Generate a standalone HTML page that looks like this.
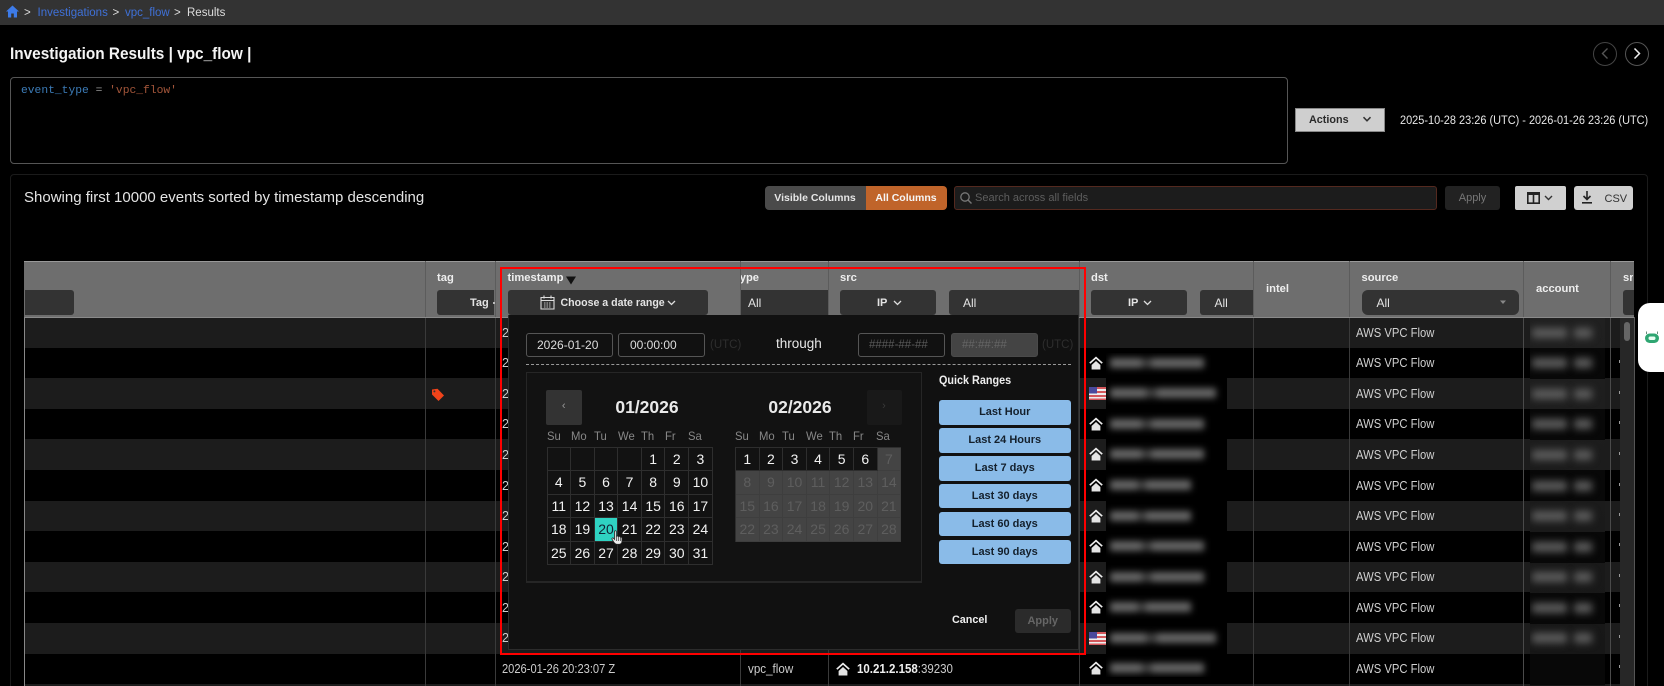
<!DOCTYPE html>
<html lang="en"><head><meta charset="utf-8"><title>Investigation Results</title>
<style>
*{box-sizing:border-box}
html,body{margin:0;padding:0;background:#000}
body{width:1664px;height:686px;overflow:hidden;position:relative;font-family:"Liberation Sans",sans-serif;color:#ddd}
#w{position:absolute;left:0;top:0;width:1664px;height:686px;overflow:hidden;filter:blur(.35px)}
.a{position:absolute;white-space:nowrap}
.z{position:absolute;left:25px;width:1595px;height:30.6px;background:#1c1c1c}
.sep{position:absolute;top:261px;width:1px;height:425px;background:#3a3a3a}
.lab{position:absolute;font-size:11.2px;font-weight:700;color:#eee;line-height:14px;white-space:nowrap}
.sel{position:absolute;top:290px;height:25px;background:#333;border-radius:3px;color:#e4e4e4;font-size:12px;line-height:26px;white-space:nowrap;overflow:hidden}
.aws{position:absolute;left:1356px;font-size:12.5px;line-height:14px;color:#d0d0d0;white-space:nowrap;transform:scaleX(.9);transform-origin:left}
.two{position:absolute;left:502px;font-size:12.5px;line-height:14px;color:#ccc;width:6px;overflow:hidden}
.tk{position:absolute;left:1619px;width:1px;height:3px;background:#999}
.inp{position:absolute;top:333px;height:24px;width:87px;border:1px solid #555;border-radius:3px;font-size:12px;line-height:22px;color:#ddd;padding-left:10px;white-space:nowrap}
.utc{position:absolute;top:338px;font-size:11.5px;line-height:14px;color:#2e2e2e}
.wd{position:absolute;top:429px;font-size:12px;line-height:14px;color:#888;transform:scaleX(.94);transform-origin:left}
.g{position:absolute;top:446.5px;display:grid;grid-template-columns:repeat(7,23.6px);grid-auto-rows:23.5px;border-top:1px solid #2e2e2e;border-left:1px solid #2e2e2e}
.g div{border-right:1px solid #2e2e2e;border-bottom:1px solid #2e2e2e;text-align:center;font-size:14px;line-height:23px;color:#f2f2f2;font-weight:500}
.g .d{background:#444;color:#5e5e5e;border-color:#3e3e3e}
.g .s{background:#2fd3c2;color:#123}
.q{position:absolute;left:939px;width:131.5px;height:24.5px;background:#8abbe8;border-radius:3px;color:#14202c;font-size:11px;font-weight:700;line-height:24px;text-align:center}
.bar{position:absolute;left:4px;height:10px;background:linear-gradient(90deg,#666 0 32%,#3a3a3a 36% 42%,#666 46% 100%);filter:blur(3.5px)}
.acc{position:absolute;height:10px;background:#5c5c5c;filter:blur(4px)}
</style></head><body>
<svg width="0" height="0" style="position:absolute"><defs>
<symbol id="h" viewBox="0 0 14 14"><path d="M7 .5 13.8 6.6 12.6 7.8 7 2.8 1.4 7.8 .2 6.6Z" fill="#eee"/><path d="M2.6 9 7 5 11.4 9V13.5H2.6Z" fill="#e4e4e4"/></symbol>
<symbol id="f" viewBox="0 0 17 13" preserveAspectRatio="none"><rect width="17" height="13" fill="#eee"/><path d="M0 0H17V2H0ZM0 4H17V6H0ZM0 8H17V10H0ZM0 11.5H17V13H0Z" fill="#d4585c"/><rect width="8" height="6.5" fill="#4a4a9c"/></symbol>
</defs></svg>
<div id="w">
<!-- top bar -->
<div class="a" style="left:0;top:0;width:1664px;height:24.5px;background:#333"></div>
<svg class="a" style="left:6px;top:5px" width="13" height="13" viewBox="0 0 13 13"><path d="M6.5 .5 13 6.5H11V12.5H7.8V8.5H5.2V12.5H2V6.5H0Z" fill="#3d7be8"/></svg>
<div class="a" style="left:24px;top:6px;font-size:11.5px;line-height:14px;color:#ddd">&gt;</div>
<div class="a" style="left:37.5px;top:6px;font-size:11.5px;line-height:14px;color:#3f71d8">Investigations</div>
<div class="a" style="left:112.5px;top:6px;font-size:11.5px;line-height:14px;color:#ddd">&gt;</div>
<div class="a" style="left:125px;top:6px;font-size:11.5px;line-height:14px;color:#3f71d8">vpc_flow</div>
<div class="a" style="left:174px;top:6px;font-size:11.5px;line-height:14px;color:#ddd">&gt;</div>
<div class="a" style="left:187px;top:6px;font-size:11.5px;line-height:14px;color:#ddd">Results</div>
<!-- title -->
<div class="a" style="left:9.5px;top:44px;font-size:16.5px;line-height:20px;font-weight:700;color:#f4f4f4;transform:scaleX(.93);transform-origin:left">Investigation Results | vpc_flow |</div>
<div class="a" style="left:1593px;top:41.5px;width:24px;height:24px;border:1px solid #444;border-radius:50%"></div>
<svg class="a" style="left:1600px;top:47px" width="10" height="13" viewBox="0 0 10 13"><path d="M7.5 1.5 2.5 6.5 7.5 11.5" fill="none" stroke="#555" stroke-width="1.4"/></svg>
<div class="a" style="left:1625px;top:41.5px;width:24px;height:24px;border:1px solid #555;border-radius:50%"></div>
<svg class="a" style="left:1632px;top:47px" width="10" height="13" viewBox="0 0 10 13"><path d="M2.5 1.5 7.5 6.5 2.5 11.5" fill="none" stroke="#eee" stroke-width="1.5"/></svg>
<!-- query -->
<div class="a" style="left:9.5px;top:77px;width:1278px;height:87px;border:1px solid #555;border-radius:4px"></div>
<div class="a" style="left:21px;top:84px;font-family:'Liberation Mono',monospace;font-size:11.3px;line-height:14px"><span style="color:#3c7cb8">event_type</span> <span style="color:#999">=</span> <span style="color:#a4563a">'vpc_flow'</span></div>
<div class="a" style="left:1295px;top:108px;width:90px;height:24px;background:#cfcfcf;border:1px solid #888"></div>
<div class="a" style="left:1309px;top:113px;font-size:10.8px;line-height:14px;font-weight:700;color:#2a2a2a">Actions</div>
<svg class="a" style="left:1362px;top:116px" width="10" height="7" viewBox="0 0 10 7"><path d="M1.5 1.2 5 4.8 8.5 1.2" fill="none" stroke="#333" stroke-width="1.5"/></svg>
<div class="a" style="left:1400px;top:113px;font-size:12.1px;line-height:14px;color:#e8e8e8;transform:scaleX(.905);transform-origin:left">2025-10-28 23:26 (UTC) - 2026-01-26 23:26 (UTC)</div>
<!-- panel -->
<div class="a" style="left:10px;top:174px;width:1638px;height:520px;border:1px solid #1b1b1b;border-radius:4px"></div>
<div class="a" style="left:24px;top:189px;font-size:15px;line-height:18px;color:#e4e4e4">Showing first 10000 events sorted by timestamp descending</div>
<div class="a" style="left:764.5px;top:186px;width:101px;height:24px;background:#4a4a4a;border-radius:4px 0 0 4px;text-align:center;font-size:10.5px;font-weight:700;line-height:24px;color:#e6e6e6">Visible Columns</div>
<div class="a" style="left:865.5px;top:186px;width:81px;height:24px;background:#c0642a;border-radius:0 4px 4px 0;text-align:center;font-size:10.5px;font-weight:700;line-height:24px;color:#f6f6f6">All Columns</div>
<div class="a" style="left:954px;top:186px;width:483px;height:23.5px;background:#1c1c1c;border:1px solid #54291f;border-radius:3px"></div>
<svg class="a" style="left:959px;top:191px" width="14" height="14" viewBox="0 0 14 14"><circle cx="6" cy="6" r="4.2" fill="none" stroke="#777" stroke-width="1.3"/><path d="M9 9 12.5 12.5" stroke="#777" stroke-width="1.4"/></svg>
<div class="a" style="left:975px;top:191px;font-size:11px;line-height:14px;color:#5e5e5e">Search across all fields</div>
<div class="a" style="left:1445px;top:186px;width:55px;height:23.5px;background:#222;border-radius:3px;text-align:center;font-size:11px;line-height:24px;color:#777">Apply</div>
<div class="a" style="left:1515px;top:186px;width:51px;height:23.5px;background:#d0d0d0;border-radius:2px"></div>
<svg class="a" style="left:1527px;top:192px" width="13" height="12" viewBox="0 0 13 12"><path d="M.8.8H12.2V11.2H.8ZM6.5.8V11.2" fill="none" stroke="#222" stroke-width="1.6"/><rect x=".8" y=".8" width="11.4" height="2.2" fill="#222"/></svg>
<svg class="a" style="left:1544px;top:195px" width="9" height="6" viewBox="0 0 9 6"><path d="M1 1 4.5 4.5 8 1" fill="none" stroke="#333" stroke-width="1.4"/></svg>
<div class="a" style="left:1574px;top:186px;width:59px;height:23.5px;background:#d0d0d0;border-radius:3px"></div>
<svg class="a" style="left:1581px;top:191px" width="12" height="14" viewBox="0 0 12 14"><path d="M6 0V8M2.5 5 6 8.5 9.5 5" fill="none" stroke="#222" stroke-width="1.6"/><rect x="1" y="11" width="10" height="1.6" fill="#222"/></svg>
<div class="a" style="left:1604.5px;top:192px;font-size:11px;line-height:14px;color:#333">CSV</div>

<!-- rows -->
<div class="z" style="top:317px"></div>
<div class="z" style="top:378.2px"></div>
<div class="z" style="top:439.4px"></div>
<div class="z" style="top:500.6px"></div>
<div class="z" style="top:561.8px"></div>
<div class="z" style="top:623px"></div>
<div class="z" style="top:684.2px"></div>

<!-- separators -->
<div class="a" style="left:24px;top:261px;width:1px;height:425px;background:#888"></div>
<div class="sep" style="left:425px"></div>
<div class="sep" style="left:494.5px"></div>
<div class="sep" style="left:740px"></div>
<div class="sep" style="left:827.5px"></div>
<div class="sep" style="left:1078.5px"></div>
<div class="sep" style="left:1253px"></div>
<div class="sep" style="left:1349px"></div>
<div class="sep" style="left:1523px;background:#4a4a4a"></div>
<div class="sep" style="left:1610px;background:#4a4a4a"></div>

<!-- row content -->
<div class="two" style="top:326px">2</div><div class="two" style="top:356px">2</div><div class="two" style="top:387px">2</div><div class="two" style="top:417px">2</div><div class="two" style="top:448px">2</div><div class="two" style="top:479px">2</div><div class="two" style="top:509px">2</div><div class="two" style="top:540px">2</div><div class="two" style="top:570px">2</div><div class="two" style="top:601px">2</div><div class="two" style="top:631px">2</div>
<svg class="a" style="left:431px;top:388px" width="14" height="14" viewBox="0 0 14 14"><path d="M1 1.5 6.5 .8 13 7.5 7.5 13 1 6.5Z" fill="#f0431a"/><circle cx="3.4" cy="3.4" r="1" fill="#333"/></svg>
<div class="a" style="left:502px;top:662px;font-size:12.5px;line-height:14px;color:#ccc;transform:scaleX(.89);transform-origin:left">2026-01-26 20:23:07 Z</div>
<div class="a" style="left:748px;top:662px;font-size:12.5px;line-height:14px;color:#ccc;transform:scaleX(.93);transform-origin:left">vpc_flow</div>
<svg class="a" style="left:836px;top:662px" width="14" height="14"><use href="#h"/></svg>
<div class="a" style="left:857px;top:662px;font-size:12.5px;line-height:14px;color:#ccc;transform:scaleX(.92);transform-origin:left"><b style="color:#eee">10.21.2.158</b>:39230</div>

<div class="aws" style="top:326px">AWS VPC Flow</div><div class="aws" style="top:356px">AWS VPC Flow</div><div class="aws" style="top:387px">AWS VPC Flow</div><div class="aws" style="top:417px">AWS VPC Flow</div><div class="aws" style="top:448px">AWS VPC Flow</div><div class="aws" style="top:479px">AWS VPC Flow</div><div class="aws" style="top:509px">AWS VPC Flow</div><div class="aws" style="top:540px">AWS VPC Flow</div><div class="aws" style="top:570px">AWS VPC Flow</div><div class="aws" style="top:601px">AWS VPC Flow</div><div class="aws" style="top:631px">AWS VPC Flow</div><div class="aws" style="top:662px">AWS VPC Flow</div>

<div class="tk" style="top:360px"></div><div class="tk" style="top:391px"></div><div class="tk" style="top:421px"></div><div class="tk" style="top:452px"></div><div class="tk" style="top:483px"></div><div class="tk" style="top:513px"></div><div class="tk" style="top:543px"></div><div class="tk" style="top:574px"></div><div class="tk" style="top:604px"></div><div class="tk" style="top:635px"></div><div class="tk" style="top:665px"></div>

<!-- dst icons -->
<svg class="a" style="left:1089px;top:356px" width="14" height="14"><use href="#h"/></svg>
<svg class="a" style="left:1089px;top:387px" width="17" height="13"><use href="#f"/></svg>
<svg class="a" style="left:1089px;top:417px" width="14" height="14"><use href="#h"/></svg>
<svg class="a" style="left:1089px;top:447px" width="14" height="14"><use href="#h"/></svg>
<svg class="a" style="left:1089px;top:478px" width="14" height="14"><use href="#h"/></svg>
<svg class="a" style="left:1089px;top:509px" width="14" height="14"><use href="#h"/></svg>
<svg class="a" style="left:1089px;top:539px" width="14" height="14"><use href="#h"/></svg>
<svg class="a" style="left:1089px;top:570px" width="14" height="14"><use href="#h"/></svg>
<svg class="a" style="left:1089px;top:600px" width="14" height="14"><use href="#h"/></svg>
<svg class="a" style="left:1089px;top:632px" width="17" height="13"><use href="#f"/></svg>
<svg class="a" style="left:1089px;top:661px" width="14" height="14"><use href="#h"/></svg>

<!-- dst blurred -->
<div class="a" style="left:1106px;top:353px;width:121px;height:324px;background:#000;overflow:hidden">
<div class="bar" style="top:5px;width:94px"></div>
<div class="bar" style="top:35px;width:106px"></div>
<div class="bar" style="top:66px;width:94px"></div>
<div class="bar" style="top:96px;width:94px"></div>
<div class="bar" style="top:127px;width:81px"></div>
<div class="bar" style="top:158px;width:81px"></div>
<div class="bar" style="top:188px;width:94px"></div>
<div class="bar" style="top:219px;width:94px"></div>
<div class="bar" style="top:249px;width:81px"></div>
<div class="bar" style="top:280px;width:106px"></div>
<div class="bar" style="top:310px;width:94px"></div>
</div>

<!-- account blurred -->
<div class="a" style="left:1530px;top:318px;width:75px;height:368px;overflow:hidden;background:linear-gradient(#202020,#161616 100%)">
<div style="position:absolute;left:0;top:30px;width:75px;height:30.6px;background:#080808"></div><div style="position:absolute;left:0;top:91px;width:75px;height:30.6px;background:#080808"></div><div style="position:absolute;left:0;top:152px;width:75px;height:30.6px;background:#080808"></div><div style="position:absolute;left:0;top:214px;width:75px;height:30.6px;background:#080808"></div><div style="position:absolute;left:0;top:275px;width:75px;height:30.6px;background:#080808"></div><div style="position:absolute;left:0;top:336px;width:75px;height:30.6px;background:#080808"></div>
<div class="acc" style="left:2px;top:10px;width:35px"></div><div class="acc" style="left:44px;top:10px;width:18px"></div>
<div class="acc" style="left:2px;top:40px;width:35px"></div><div class="acc" style="left:44px;top:40px;width:18px"></div>
<div class="acc" style="left:2px;top:71px;width:35px"></div><div class="acc" style="left:44px;top:71px;width:18px"></div>
<div class="acc" style="left:2px;top:101px;width:35px"></div><div class="acc" style="left:44px;top:101px;width:18px"></div>
<div class="acc" style="left:2px;top:132px;width:35px"></div><div class="acc" style="left:44px;top:132px;width:18px"></div>
<div class="acc" style="left:2px;top:163px;width:35px"></div><div class="acc" style="left:44px;top:163px;width:18px"></div>
<div class="acc" style="left:2px;top:193px;width:35px"></div><div class="acc" style="left:44px;top:193px;width:18px"></div>
<div class="acc" style="left:2px;top:224px;width:35px"></div><div class="acc" style="left:44px;top:224px;width:18px"></div>
<div class="acc" style="left:2px;top:254px;width:35px"></div><div class="acc" style="left:44px;top:254px;width:18px"></div>
<div class="acc" style="left:2px;top:285px;width:35px"></div><div class="acc" style="left:44px;top:285px;width:18px"></div>
<div class="acc" style="left:2px;top:315px;width:35px"></div><div class="acc" style="left:44px;top:315px;width:18px"></div>
</div>

<!-- scrollbar -->
<div class="a" style="left:1620px;top:317px;width:13.5px;height:369px;background:#272727"></div>
<div class="a" style="left:1624px;top:322px;width:5.5px;height:19px;background:#666;border-radius:3px"></div>
<div class="a" style="left:1633.5px;top:317px;width:1px;height:369px;background:#555"></div>

<!-- header -->
<div class="a" style="left:24px;top:260.5px;width:1610px;height:57px;background:#6e6e6e;border-top:1px solid #999;border-bottom:1px solid #8a8a8a;overflow:hidden"></div>
<div class="a" style="left:425px;top:261px;width:1px;height:56px;background:#5c5c5c"></div>
<div class="a" style="left:494.5px;top:261px;width:1px;height:56px;background:#5c5c5c"></div>
<div class="a" style="left:740px;top:261px;width:1px;height:56px;background:#5c5c5c"></div>
<div class="a" style="left:827.5px;top:261px;width:1px;height:56px;background:#5c5c5c"></div>
<div class="a" style="left:1078.5px;top:261px;width:1px;height:56px;background:#5c5c5c"></div>
<div class="a" style="left:1253px;top:261px;width:1px;height:56px;background:#5c5c5c"></div>
<div class="a" style="left:1349px;top:261px;width:1px;height:56px;background:#5c5c5c"></div>
<div class="a" style="left:1523px;top:261px;width:1px;height:56px;background:#5c5c5c"></div>
<div class="a" style="left:1610px;top:261px;width:1px;height:56px;background:#5c5c5c"></div>

<div class="sel" style="left:25px;width:49px;border-radius:0 3px 3px 0"></div>
<div class="lab" style="left:437px;top:271px">tag</div>
<div class="sel" style="left:437px;width:57px;border-radius:3px 0 0 3px;font-weight:700;font-size:11px;padding-left:33px">Tag</div>
<div class="a" style="left:493px;top:302px;width:1.5px;height:1.5px;background:#bbb"></div>
<div class="lab" style="left:507.5px;top:271px">timestamp</div>
<svg class="a" style="left:565px;top:276px" width="12" height="9" viewBox="0 0 12 9"><path d="M1 .5H11L6 8.5Z" fill="#111"/></svg>
<div class="sel" style="left:507.5px;width:200px;font-weight:700;font-size:10.6px;padding-left:53px">Choose a date range</div>
<svg class="a" style="left:540px;top:295px" width="15" height="15" viewBox="0 0 15 15"><path d="M1 2.5H14V14H1ZM1 5.5H14M4 .5V3.5M11 .5V3.5" fill="none" stroke="#ddd" stroke-width="1.1"/><path d="M4 8H11M4 10H11M4 12H11" stroke="#bbb" stroke-width="1" stroke-dasharray="1.5 1"/></svg>
<svg class="a" style="left:667px;top:300px" width="9" height="6" viewBox="0 0 9 6"><path d="M1 1 4.5 4.5 8 1" fill="none" stroke="#ddd" stroke-width="1.3"/></svg>
<div class="lab" style="left:741px;top:271px;width:25px;overflow:hidden"><span style="margin-left:-5px">type</span></div>
<div class="sel" style="left:741px;width:86.5px;padding-left:7px;border-radius:0">All</div>
<div class="lab" style="left:840px;top:271px">src</div>
<div class="sel" style="left:840px;width:96px;font-weight:700;font-size:11px;padding-left:37px">IP</div>
<svg class="a" style="left:893px;top:300px" width="9" height="6" viewBox="0 0 9 6"><path d="M1 1 4.5 4.5 8 1" fill="none" stroke="#ddd" stroke-width="1.3"/></svg>
<div class="sel" style="left:949px;width:129.5px;padding-left:14px;border-radius:3px 0 0 3px">All</div>
<div class="lab" style="left:1091px;top:271px">dst</div>
<div class="sel" style="left:1091px;width:96px;font-weight:700;font-size:11px;padding-left:37px">IP</div>
<svg class="a" style="left:1143px;top:300px" width="9" height="6" viewBox="0 0 9 6"><path d="M1 1 4.5 4.5 8 1" fill="none" stroke="#ddd" stroke-width="1.3"/></svg>
<div class="sel" style="left:1199.5px;width:53.5px;padding-left:15px;border-radius:3px 0 0 3px">All</div>
<div class="lab" style="left:1266px;top:282px">intel</div>
<div class="lab" style="left:1361.5px;top:271px">source</div>
<div class="sel" style="left:1361.5px;width:157px;padding-left:15px;border-radius:6px">All</div>
<svg class="a" style="left:1499px;top:300px" width="8" height="5" viewBox="0 0 8 5"><path d="M1 .5H7L4 4Z" fill="#888"/></svg>
<div class="lab" style="left:1536px;top:282px">account</div>
<div class="lab" style="left:1623px;top:271px;width:10px;overflow:hidden">src</div>
<div class="sel" style="left:1623px;width:10.5px;border-radius:3px 0 0 3px"></div>

<!-- dropdown -->
<div class="a" style="left:507.5px;top:315px;width:571px;height:335px;background:#111;border:1px solid #2c2c2c;border-top:0"></div>
<div class="inp" style="left:526px">2026-01-20</div>
<div class="inp" style="left:618px;padding-left:11px">00:00:00</div>
<div class="utc" style="left:710px">(UTC)</div>
<div class="a" style="left:776px;top:335px;font-size:13.5px;line-height:18px;color:#e8e8e8">through</div>
<div class="inp" style="left:858px;color:#5a5a5a;font-size:11.5px">####-##-##</div>
<div class="inp" style="left:951px;background:#444;color:#666;font-size:11.5px;border-color:#4a4a4a">##:##:##</div>
<div class="utc" style="left:1042px">(UTC)</div>
<div class="a" style="left:526px;top:364px;width:545px;border-top:1px dashed #999"></div>

<div class="a" style="left:526px;top:372px;width:396px;height:211px;background:#121212;border:1px solid #262626;border-bottom-width:2px"></div>
<div class="a" style="left:546px;top:390px;width:35.5px;height:35px;background:#333;border-radius:2px;text-align:center;font-size:11px;line-height:33px;color:#999">‹</div>
<div class="a" style="left:866.5px;top:390px;width:35px;height:35px;background:#191919;border-radius:2px;text-align:center;font-size:11px;line-height:33px;color:#3a3a3a">›</div>
<div class="a" style="left:607px;top:397px;width:80px;text-align:center;font-size:17.5px;font-weight:700;line-height:20px;color:#eaeaea">01/2026</div>
<div class="a" style="left:760px;top:397px;width:80px;text-align:center;font-size:17.5px;font-weight:700;line-height:20px;color:#eaeaea">02/2026</div>

<div class="wd" style="left:547px">Su</div><div class="wd" style="left:570.5px">Mo</div><div class="wd" style="left:594px">Tu</div><div class="wd" style="left:618px">We</div><div class="wd" style="left:641px">Th</div><div class="wd" style="left:664.5px">Fr</div><div class="wd" style="left:688px">Sa</div>
<div class="wd" style="left:735px">Su</div><div class="wd" style="left:758.5px">Mo</div><div class="wd" style="left:782px">Tu</div><div class="wd" style="left:806px">We</div><div class="wd" style="left:829px">Th</div><div class="wd" style="left:852.5px">Fr</div><div class="wd" style="left:876px">Sa</div>

<div class="g" style="left:546.5px">
<div></div><div></div><div></div><div></div><div>1</div><div>2</div><div>3</div>
<div>4</div><div>5</div><div>6</div><div>7</div><div>8</div><div>9</div><div>10</div>
<div>11</div><div>12</div><div>13</div><div>14</div><div>15</div><div>16</div><div>17</div>
<div>18</div><div>19</div><div class="s">20</div><div>21</div><div>22</div><div>23</div><div>24</div>
<div>25</div><div>26</div><div>27</div><div>28</div><div>29</div><div>30</div><div>31</div>
</div>
<div class="g" style="left:735px">
<div>1</div><div>2</div><div>3</div><div>4</div><div>5</div><div>6</div><div class="d">7</div>
<div class="d">8</div><div class="d">9</div><div class="d">10</div><div class="d">11</div><div class="d">12</div><div class="d">13</div><div class="d">14</div>
<div class="d">15</div><div class="d">16</div><div class="d">17</div><div class="d">18</div><div class="d">19</div><div class="d">20</div><div class="d">21</div>
<div class="d">22</div><div class="d">23</div><div class="d">24</div><div class="d">25</div><div class="d">26</div><div class="d">27</div><div class="d">28</div>
</div>
<svg class="a" style="left:611px;top:530px" width="12" height="15" viewBox="0 0 12 15"><path d="M3.5 1.5C3.5.5 5.3.5 5.3 1.5V6.5C6 5.6 7.2 6 7.3 6.8 8 6 9.2 6.4 9.3 7.3 10 6.9 11 7.3 11 8.3V11C11 13 9.8 14.3 7.8 14.3H6C4.6 14.3 3.8 13.6 3 12.4L1 9.2C.5 8.3 1.7 7.4 2.5 8.2L3.5 9.4Z" fill="#eee" stroke="#222" stroke-width=".8"/><path d="M5.3 7V11M7.3 7V11M9.3 7.5V11" stroke="#222" stroke-width=".7"/></svg>

<div class="a" style="left:939px;top:374px;font-size:11.5px;font-weight:700;line-height:14px;color:#eee;transform:scaleX(.94);transform-origin:left">Quick Ranges</div>
<div class="q" style="top:400px">Last Hour</div>
<div class="q" style="top:428px">Last 24 Hours</div>
<div class="q" style="top:456px">Last 7 days</div>
<div class="q" style="top:483.7px">Last 30 days</div>
<div class="q" style="top:511.7px">Last 60 days</div>
<div class="q" style="top:539.7px">Last 90 days</div>
<div class="a" style="left:952px;top:613px;font-size:10.8px;font-weight:700;line-height:14px;color:#f0f0f0">Cancel</div>
<div class="a" style="left:1015px;top:608.7px;width:55.5px;height:24.3px;background:#2b2b2b;border-radius:3px;text-align:center;font-size:11px;font-weight:700;line-height:24px;color:#666">Apply</div>

<!-- red frame -->
<div class="a" style="left:499.5px;top:267px;width:586px;height:387.5px;border:2px solid #f00"></div>

<!-- bot widget -->
<div class="a" style="left:1638px;top:302.5px;width:30px;height:69px;background:#fff;border-radius:12px 0 0 12px"></div>
<svg class="a" style="left:1644px;top:330px" width="16" height="14" viewBox="0 0 16 14"><path d="M2.5 1.5V4M13.5 1.5V4" stroke="#6a8a7a" stroke-width="1"/><rect x="1" y="3.5" width="14" height="9.5" rx="4.7" fill="#2fa672"/><rect x="4.5" y="6.5" width="7" height="3.5" rx="1.7" fill="#eafff4"/></svg>
</div>
</body></html>
